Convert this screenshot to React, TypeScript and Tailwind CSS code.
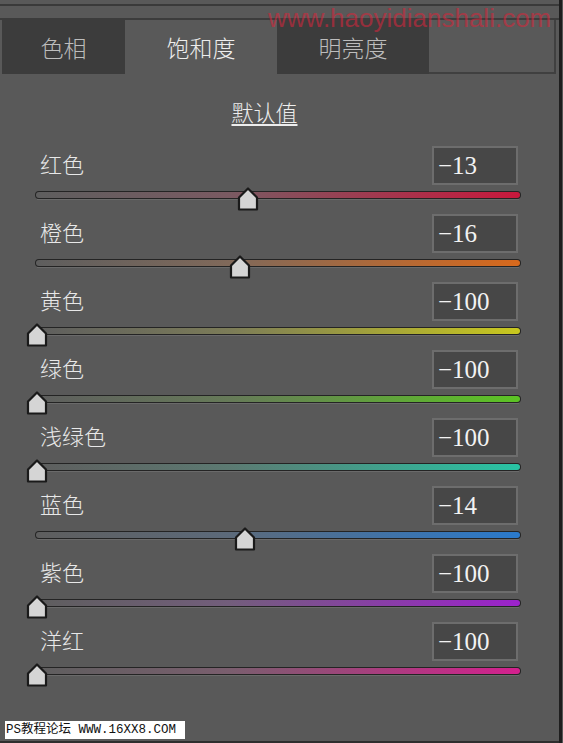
import React from "react";

type Row = {
  label: string;
  value: number;
  grad: string;
};

const rows: Row[] = [
  { label: "红色", value: -13, grad: "bg-[linear-gradient(to_right,#5e5e5e,#7a5a62_40%,#c8183c)]" },
  { label: "橙色", value: -16, grad: "bg-[linear-gradient(to_right,#5e5e5e,#80695a_40%,#d8691c)]" },
  { label: "黄色", value: -100, grad: "bg-[linear-gradient(to_right,#5e5e5e,#7c7c58_40%,#c9c81e)]" },
  { label: "绿色", value: -100, grad: "bg-[linear-gradient(to_right,#5e5e5e,#667a58_40%,#5cc424)]" },
  { label: "浅绿色", value: -100, grad: "bg-[linear-gradient(to_right,#5e5e5e,#5c7a72_40%,#28c4a4)]" },
  { label: "蓝色", value: -14, grad: "bg-[linear-gradient(to_right,#5e5e5e,#5c6a7a_40%,#2a7acc)]" },
  { label: "紫色", value: -100, grad: "bg-[linear-gradient(to_right,#5e5e5e,#735e7c_40%,#9c22cc)]" },
  { label: "洋红", value: -100, grad: "bg-[linear-gradient(to_right,#5e5e5e,#7a5e6e_40%,#d4208e)]" },
];

const cjk = "font-['Noto_Sans_CJK_SC',sans-serif] font-light";

function Thumb({ value }: { value: number }) {
  const frac = (value + 100) / 200;
  const center = 37 + frac * 484;
  return (
    <svg
      width="22"
      height="24"
      viewBox="0 0 22 24"
      className="absolute top-[1px]"
      style={{ left: center - 11 }}
    >
      <path
        d="M11 1.5 L20 10.5 L20 22.5 L2 22.5 L2 10.5 Z"
        fill="#d5d5d5"
        stroke="#1a1a1a"
        strokeWidth="2.2"
        strokeLinejoin="round"
      />
    </svg>
  );
}

function SliderRow({ row }: { row: Row }) {
  return (
    <div className="flex h-[68px] flex-col">
      <div className="flex h-[42px] items-start justify-between pl-[40px] pr-[41px]">
        <span className={`${cjk} pt-[6px] text-[22px] leading-[26px] text-[#e8e8e8]`}>
          {row.label}
        </span>
        <div className="mt-[2px] flex h-[39px] w-[86px] items-center border-2 border-[#6d6d6d] bg-[#474747] pl-[4px]">
          <span className="font-['Liberation_Serif',serif] text-[25px] leading-none text-[#f2f2f2]">
            {"\u2212" + Math.abs(row.value)}
          </span>
        </div>
      </div>
      <div className="relative h-[26px]">
        <div className="ml-[35px] mr-[38px] mt-[5px] h-[8px] rounded-full bg-[#242424] p-[1px]">
          <div className={`h-full w-full rounded-full ${row.grad}`} />
        </div>
        <div className="ml-[37px] mr-[40px] h-[1px] bg-[#6a6a6a]" />
        <Thumb value={row.value} />
      </div>
    </div>
  );
}

export default function App() {
  return (
    <div className="relative h-[743px] w-[563px] overflow-hidden bg-[#595959]">
      <div className="flex h-full w-[563px]">
        <div className="flex h-full w-[559px] flex-col border-b-2 border-[#2e2e2e]">
          <div className="h-[4px]" />
          <div className="h-[2px] bg-[#3a3a3a]" />
          <div className="h-[12px]" />
          {/* Tabs */}
          <div className="flex h-[56px] border-t-2 border-[#3c3c3c]">
            <div className="w-[2px]" />
            <div
              className={`${cjk} flex w-[123px] items-center justify-center bg-[#3c3c3c] text-[23px] text-[#bdbdbd]`}
            >
              色相
            </div>
            <div
              className={`${cjk} flex w-[152px] items-center justify-center text-[23px] text-[#ededed]`}
            >
              饱和度
            </div>
            <div
              className={`${cjk} flex w-[152px] items-center justify-center bg-[#3c3c3c] text-[23px] text-[#bdbdbd]`}
            >
              明亮度
            </div>
            <div className="w-[127px] border-b-2 border-r-2 border-[#404040]" />
          </div>
          {/* Title */}
          <div className="flex h-[70px] justify-center pt-[24px]">
            <span
              className={`${cjk} ml-[-30px] h-[28px] text-[22px] leading-[26px] text-[#ededed] underline underline-offset-[3px]`}
            >
              默认值
            </span>
          </div>
          {rows.map((r) => (
            <SliderRow key={r.label} row={r} />
          ))}
        </div>
        <div className="h-full w-[3px] bg-[#1e1e1e]" />
        <div className="h-full w-[1px] bg-[#575757]" />
      </div>

      {/* Red watermark */}
      <div className="pointer-events-none absolute left-[268px] top-[4px] font-['Liberation_Sans',sans-serif] text-[26px] leading-[28px] text-[#d2283c] opacity-60">
        www.haoyidianshali.com
      </div>

      {/* Bottom watermark */}
      <div className="absolute left-[5px] top-[721px] flex h-[18px] w-[180px] items-center bg-white pl-[1px]">
        <span className="font-['Liberation_Mono','Noto_Sans_CJK_SC',monospace] text-[12.5px] leading-none text-[#111]">
          PS教程论坛 WWW.16XX8.COM
        </span>
      </div>
    </div>
  );
}
